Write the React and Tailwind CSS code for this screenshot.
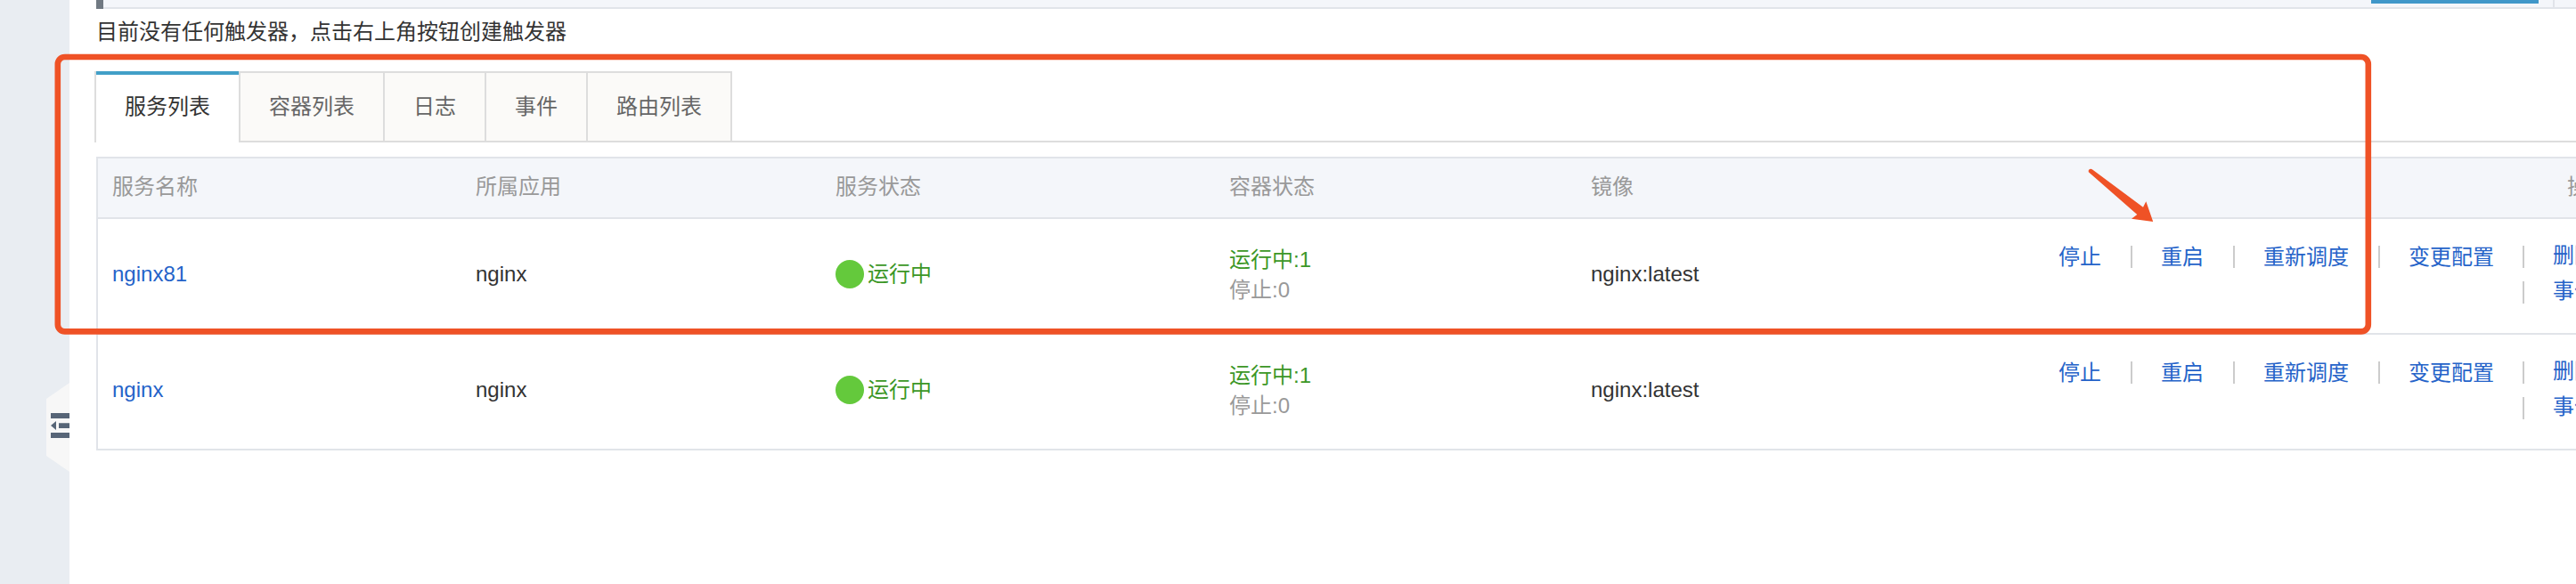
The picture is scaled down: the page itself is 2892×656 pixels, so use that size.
const TABS = ['服务列表', '容器列表', '日志', '事件', '路由列表'];
const SERVICES = [
  { name: 'nginx81', app: 'nginx', image: 'nginx:latest' },
  { name: 'nginx', app: 'nginx', image: 'nginx:latest' },
];
const ACTIONS = ['停止', '重启', '重新调度', '变更配置'];
const COLUMNS = 'grid grid-cols-[408px_404px_442px_406px_525px_1fr] pl-4';

function Separator() {
  return <span className="h-[25px] w-0.5 shrink-0 bg-[#ccc]" />;
}

function Sidebar() {
  return (
    <aside className="relative h-full w-[78px] shrink-0 bg-[#e9edf2]">
      <svg className="absolute top-[430px] left-[52px]" width="26" height="100" viewBox="0 0 26 100">
        <path d="M26 0 0 18v64l26 18z" fill="#f7f7f7" />
        <path d="M5 34h21v6H5zM14 45.3h12v5.7H14zM5 56h21v6H5zM5 48l6-5v10z" fill="#576577" />
      </svg>
    </aside>
  );
}

function Tabs() {
  return (
    <nav className="flex h-20 items-stretch leading-[76px]">
      {TABS.map((tab, i) =>
        i === 0 ? (
          <a key={tab} className="border-l-2 border-[#ddd] text-[#333]">
            <span className="block h-full border-t-4 border-[#429fc7] px-8 leading-[72px]">{tab}</span>
          </a>
        ) : (
          <a
            key={tab}
            className="border-y-2 border-l-2 border-[#ddd] bg-[#fbfaf8] px-8 text-[#666] last-of-type:border-r-2"
          >
            {tab}
          </a>
        )
      )}
      <div className="flex-1 border-b-2 border-[#ddd]" />
    </nav>
  );
}

function ServiceRow({ service }) {
  return (
    <div className={`${COLUMNS} h-[130px] border-b-2 border-[#e1e4e9] text-[#333]`}>
      <a className="pt-11 text-[#2563c9]">{service.name}</a>
      <span className="pt-11">{service.app}</span>
      <span className="flex items-start gap-1 pt-11 text-[#3c9727]">
        <i className="mt-0.5 size-8 rounded-full bg-[#64c93c]" />
        运行中
      </span>
      <div className="pt-[29px] leading-[34px]">
        <p className="text-[#3c9727]">运行中:1</p>
        <p className="text-[#999]">停止:0</p>
      </div>
      <span className="pt-11">{service.image}</span>
      <div className="flex items-start gap-8 whitespace-nowrap pt-[30px] text-[#2563c9]">
        {ACTIONS.map((action) => (
          <span key={action} className="flex h-[25px] shrink-0 items-center gap-[33px]">
            <span>{action}</span>
            {action !== '变更配置' && <Separator />}
          </span>
        ))}
        <div className="flex flex-col gap-[15px]">
          {['删除', '事件'].map((action) => (
            <span key={action} className="flex h-[25px] items-center gap-8">
              <Separator />
              <span className="mb-[3px]">{action}</span>
            </span>
          ))}
        </div>
      </div>
    </div>
  );
}

function Annotation() {
  return (
    <svg className="pointer-events-none absolute inset-0" width="2892" height="656" viewBox="0 0 2892 656">
      <rect x="64.8" y="64" width="2594" height="308.4" rx="8" fill="none" stroke="#ef5226" strokeWidth="6.6" />
      <path
        d="M2344.8 193.3C2344 190.5 2347 188.6 2349.5 190.8L2406 232.7L2409.3 226.3L2417.2 249L2393 245.8L2399.3 241Z"
        fill="#ef5226"
      />
    </svg>
  );
}

export default function App() {
  return (
    <div
      lang="zh-CN"
      className="relative flex h-[656px] w-[2892px] overflow-hidden bg-white font-['Liberation_Sans','Noto_Sans_CJK_SC',sans-serif] text-2xl leading-9"
    >
      <Sidebar />
      <main className="min-w-0 flex-1 pl-7">
        <div className="ml-0.5 flex h-2.5 items-start">
          <div className="h-full w-2 bg-[#707982]" />
          <div className="flex h-full flex-1 border-b-2 border-[#e1e4e9] bg-[#f4f6fa]">
            <div className="ml-[2546px] h-1 w-[188px] bg-[#4097c9]" />
            <div className="ml-4 h-full w-0.5 bg-[#e1e4e9]" />
          </div>
        </div>
        <p className="ml-0.5 h-[70px] pt-2 text-[#333]">目前没有任何触发器，点击右上角按钮创建触发器</p>
        <Tabs />
        <section className="mt-4 ml-0.5 overflow-hidden border-t-2 border-l-2 border-[#e1e4e9]">
          <div className={`${COLUMNS} h-[68px] border-b-2 border-[#e1e4e9] bg-[#f4f6fa] pt-3.5 whitespace-nowrap text-[#999]`}>
            <span>服务名称</span>
            <span>所属应用</span>
            <span>服务状态</span>
            <span>容器状态</span>
            <span>镜像</span>
            <span className="pl-[571px]">操作</span>
          </div>
          {SERVICES.map((service) => (
            <ServiceRow key={service.name} service={service} />
          ))}
        </section>
      </main>
      <Annotation />
    </div>
  );
}
